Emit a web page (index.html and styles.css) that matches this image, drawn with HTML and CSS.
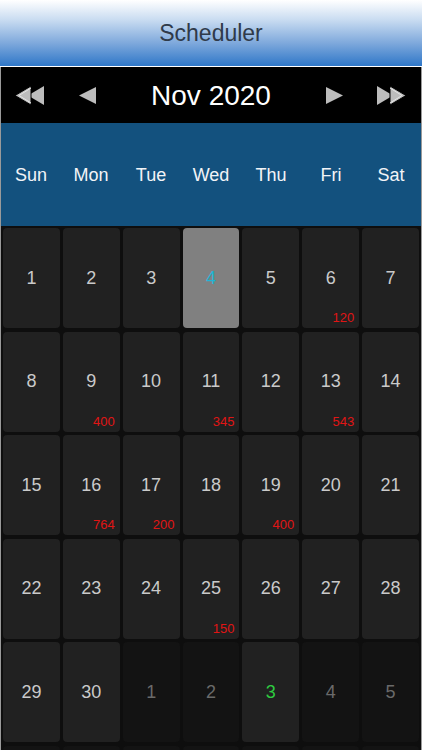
FILE: index.html
```
<!DOCTYPE html>
<html lang="en">

<head>
    <meta charset="UTF-8">
    <meta name="viewport" content="width=device-width, initial-scale=1.0">
    <title>Scheduler</title>
    <link rel="stylesheet" href="styles.css">
</head>

<body>
    <div class="top-bar">Scheduler</div>
    <div class="calendar">
        <div class="nav">
            <span class="nav-btn wide">
                <svg width="31" height="21" viewBox="0 0 31 21">
                    <polygon points="30,1 30,20 14,10.5" fill="#bdbdbd" />
                    <polygon points="17,1 17,20 1,10.5" fill="#bdbdbd" stroke="#000" stroke-width="1" />
                    <polyline points="17,3 5,10.5 17,18" fill="none" stroke="#e6e6e6" stroke-width="1" />
                </svg>
            </span>
            <span class="nav-btn prev">
                <svg width="19" height="21" viewBox="0 0 19 21">
                    <polygon points="18,2 18,19 1,10.5" fill="#bdbdbd" />
                </svg>
            </span>
            <div class="month">Nov 2020</div>
            <span class="nav-btn next">
                <svg width="19" height="21" viewBox="0 0 19 21">
                    <polygon points="1,2 1,19 18,10.5" fill="#bdbdbd" />
                </svg>
            </span>
            <span class="nav-btn wide">
                <svg width="31" height="21" viewBox="0 0 31 21">
                    <polygon points="1,1 1,20 17,10.5" fill="#bdbdbd" />
                    <polygon points="14,1 14,20 30,10.5" fill="#bdbdbd" stroke="#000" stroke-width="1" />
                    <polyline points="14,3 26,10.5 14,18" fill="none" stroke="#e6e6e6" stroke-width="1" />
                </svg>
            </span>
        </div>
        <div class="week-names">
            <div>Sun</div>
            <div>Mon</div>
            <div>Tue</div>
            <div>Wed</div>
            <div>Thu</div>
            <div>Fri</div>
            <div>Sat</div>
        </div>
        <div class="days"></div>
    </div>

    <script>
        let days = document.querySelector('.days');
        let counts = { 6: 120, 9: 400, 11: 345, 13: 543, 16: 764, 17: 200, 19: 400, 25: 150 };

        for (let d = 1; d <= 30; d++) {
            let cls = 'day';
            if (d === 4) cls += ' selected';
            let count = counts[d] ? `<span class="count">${counts[d]}</span>` : '';
            days.innerHTML += `<div class="${cls}"><span class="num">${d}</span>${count}</div>`;
        }
        // next month
        for (let d = 1; d <= 12; d++) {
            let cls = d === 3 ? 'day today' : 'day other';
            days.innerHTML += `<div class="${cls}"><span class="num">${d}</span></div>`;
        }
    </script>
</body>

</html>
```

FILE: styles.css
```
* {
    box-sizing: border-box;
}

body {
    margin: 0;
    background-color: #fff;
    font-family: "Liberation Sans", Arial, sans-serif;
    overflow: hidden;
}

.top-bar {
    height: 67px;
    display: flex;
    align-items: center;
    justify-content: center;
    font-size: 23px;
    color: #2f3a4a;
    background: linear-gradient(to bottom, #ffffff 0%, #c9dcf1 30%, #7fa9dc 65%, #2f77c8 100%);
    border-bottom: 1px solid #fff;
}

.calendar {
    border-left: 1px solid #9a9a9a;
    border-right: 1px solid #9a9a9a;
    background-color: #0e0e0e;
}

.nav {
    height: 56px;
    background-color: #000;
    display: flex;
    align-items: center;
    padding: 1px 14px 0 13px;
}

.nav-btn svg {
    display: block;
}

.prev {
    margin-left: 33px;
}

.next {
    margin-right: 32px;
}

.month {
    flex: 1;
    text-align: center;
    color: #fff;
    font-size: 28px;
}

.week-names {
    height: 103px;
    background-color: #13517e;
    display: grid;
    grid-template-columns: repeat(7, 1fr);
    align-items: center;
    text-align: center;
    color: #f2f4f7;
    font-size: 18px;
    padding-top: 2px;
}

.days {
    display: grid;
    grid-template-columns: repeat(7, 1fr);
    grid-auto-rows: 100px;
    column-gap: 3px;
    row-gap: 3.5px;
    padding: 2px 2px 2px 2px;
}

.day {
    position: relative;
    background-color: #212121;
    border-radius: 4px;
    display: flex;
    align-items: center;
    justify-content: center;
    color: #cacaca;
    font-size: 18px;
}

.day.selected {
    background-color: #808080;
    color: #22b4d4;
}

.day.other {
    background-color: #131313;
    color: #6a6a6a;
}

.day.today {
    color: #2ecc40;
}

.count {
    position: absolute;
    right: 5px;
    bottom: 3px;
    color: #e01515;
    font-size: 13px;
}
```
